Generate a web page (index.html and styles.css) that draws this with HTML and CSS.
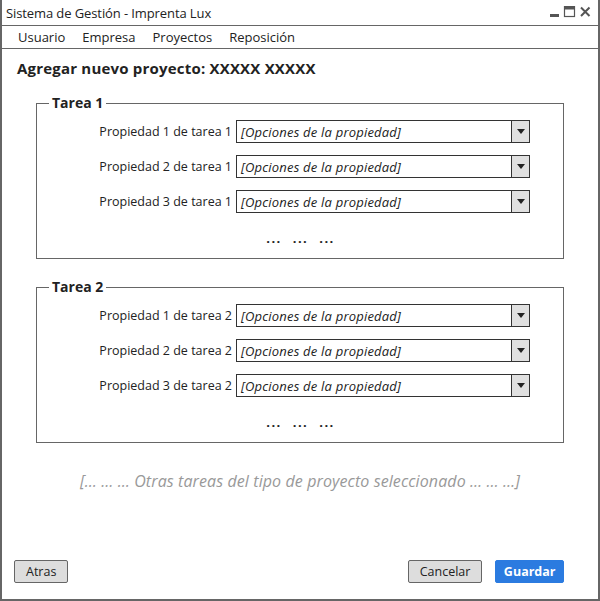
FILE: index.html
```html
<!DOCTYPE html>
<html lang="es">
<head>
<meta charset="utf-8">
<title>Sistema de Gestión - Imprenta Lux</title>
<link rel="stylesheet" href="styles.css">
</head>
<body>
<div class="window">
  <div class="titlebar">
    <span class="title">Sistema de Gestión - Imprenta Lux</span>
    <div class="controls">
      <svg width="44" height="14" viewBox="0 0 44 14">
        <rect x="0" y="8" width="9" height="3" fill="#555"/>
        <rect x="14.5" y="0.5" width="10" height="10" fill="none" stroke="#555" stroke-width="1.2"/>
        <rect x="14.5" y="0.5" width="10" height="3" fill="#555"/>
        <path d="M31 1.5 L39.5 10 M39.5 1.5 L31 10" stroke="#555" stroke-width="2" fill="none"/>
      </svg>
    </div>
  </div>
  <nav class="menubar">
    <span>Usuario</span>
    <span>Empresa</span>
    <span>Proyectos</span>
    <span>Reposición</span>
  </nav>

  <h1 class="heading">Agregar nuevo proyecto: XXXXX XXXXX</h1>

  <fieldset class="task">
    <legend>Tarea 1</legend>
    <div class="rows">
      <label>Propiedad 1 de tarea 1</label>
      <div class="select"><span>[Opciones de la propiedad]</span><i class="arrow"></i></div>
      <label>Propiedad 2 de tarea 1</label>
      <div class="select"><span>[Opciones de la propiedad]</span><i class="arrow"></i></div>
      <label>Propiedad 3 de tarea 1</label>
      <div class="select"><span>[Opciones de la propiedad]</span><i class="arrow"></i></div>
    </div>
    <div class="dots">... ... ...</div>
  </fieldset>

  <fieldset class="task second">
    <legend>Tarea 2</legend>
    <div class="rows">
      <label>Propiedad 1 de tarea 2</label>
      <div class="select"><span>[Opciones de la propiedad]</span><i class="arrow"></i></div>
      <label>Propiedad 2 de tarea 2</label>
      <div class="select"><span>[Opciones de la propiedad]</span><i class="arrow"></i></div>
      <label>Propiedad 3 de tarea 2</label>
      <div class="select"><span>[Opciones de la propiedad]</span><i class="arrow"></i></div>
    </div>
    <div class="dots">... ... ...</div>
  </fieldset>

  <p class="others">[… … … Otras tareas del tipo de proyecto seleccionado … … …]</p>

  <div class="footer">
    <button class="btn">Atras</button>
    <div class="right">
      <button class="btn cancel">Cancelar</button>
      <button class="btn primary">Guardar</button>
    </div>
  </div>
</div>
</body>
</html>
```
FILE: styles.css
```css
* { box-sizing: border-box; }
html, body { margin: 0; padding: 0; background: #fff; }
body {
  font-family: "Open Sans", "Liberation Sans", sans-serif;
  color: #222;
}
.window {
  width: 600px;
  height: 601px;
  border: 1px solid #666;
  border-width: 0 2px 2px 2px;
  display: flex;
  flex-direction: column;
}
.titlebar {
  height: 26px;
  border-bottom: 1px solid #666;
  display: flex;
  align-items: center;
  justify-content: space-between;
  padding: 0 0 0 4px;
}
.title { font-size: 13px; letter-spacing: -0.1px; }
.controls { display: flex; padding-right: 4px; padding-top: 1px; }
.controls svg { display: block; }
.menubar {
  height: 23px;
  border-bottom: 1px solid #666;
  display: flex;
  align-items: center;
  gap: 17px;
  padding-left: 16px;
  font-size: 13px;
}
.heading {
  margin: 9px 0 0 15px;
  font-size: 15px;
  line-height: 20px;
  font-weight: 700;
  letter-spacing: 0.2px;
  color: #222;
}
.task {
  margin: 17px 0 0 34px;
  width: 528px;
  border: 1px solid #666;
  padding: 9px 33px 12px 0;
  min-width: 0;
}
.task.second { margin-top: 20px; }
.task legend {
  margin-left: 12px;
  padding: 0 3px;
  font-weight: 700;
  font-size: 14px;
  line-height: 16px;
}
.rows {
  display: grid;
  grid-template-columns: 1fr 294px;
  column-gap: 4px;
  row-gap: 12px;
  align-items: center;
}
.rows label {
  text-align: right;
  font-size: 12.5px;
}
.select {
  height: 23px;
  border: 1px solid #333;
  display: flex;
  align-items: center;
  justify-content: space-between;
  font-size: 13px;
  letter-spacing: 0.2px;
  font-style: italic;
  color: #222;
}
.select span { padding-left: 4px; }
.arrow {
  width: 18px;
  height: 100%;
  border-left: 1px solid #333;
  background: #e0e0e0;
  display: flex;
  align-items: center;
  justify-content: center;
}
.arrow::after {
  content: "";
  border-left: 4.5px solid transparent;
  border-right: 4.5px solid transparent;
  border-top: 5px solid #222;
}
.dots {
  margin-top: 17px;
  line-height: 16px;
  text-align: center;
  font-size: 13px;
  font-weight: 700;
  letter-spacing: 1.5px;
  word-spacing: 6px;
  padding-left: 34px;
}
.others {
  margin: 28px 0 0 0;
  line-height: 20px;
  text-align: center;
  font-size: 16px;
  letter-spacing: 0.1px;
  font-style: italic;
  color: #999;
}
.footer {
  margin-top: auto;
  display: flex;
  justify-content: space-between;
  align-items: flex-end;
  padding: 0 34px 16px 12px;
}
.right { display: flex; gap: 13px; }
.btn {
  height: 23px;
  border: 1px solid #666;
  border-radius: 2px;
  background: #ddd;
  font-family: inherit;
  font-size: 12.5px;
  color: #222;
  padding: 0 11px;
}
.btn.cancel { padding: 0 11px; }
.btn.primary {
  background: #2b7be0;
  border-color: #2b7be0;
  color: #fff;
  font-weight: 700;
  padding: 0 7.5px;
}
```
